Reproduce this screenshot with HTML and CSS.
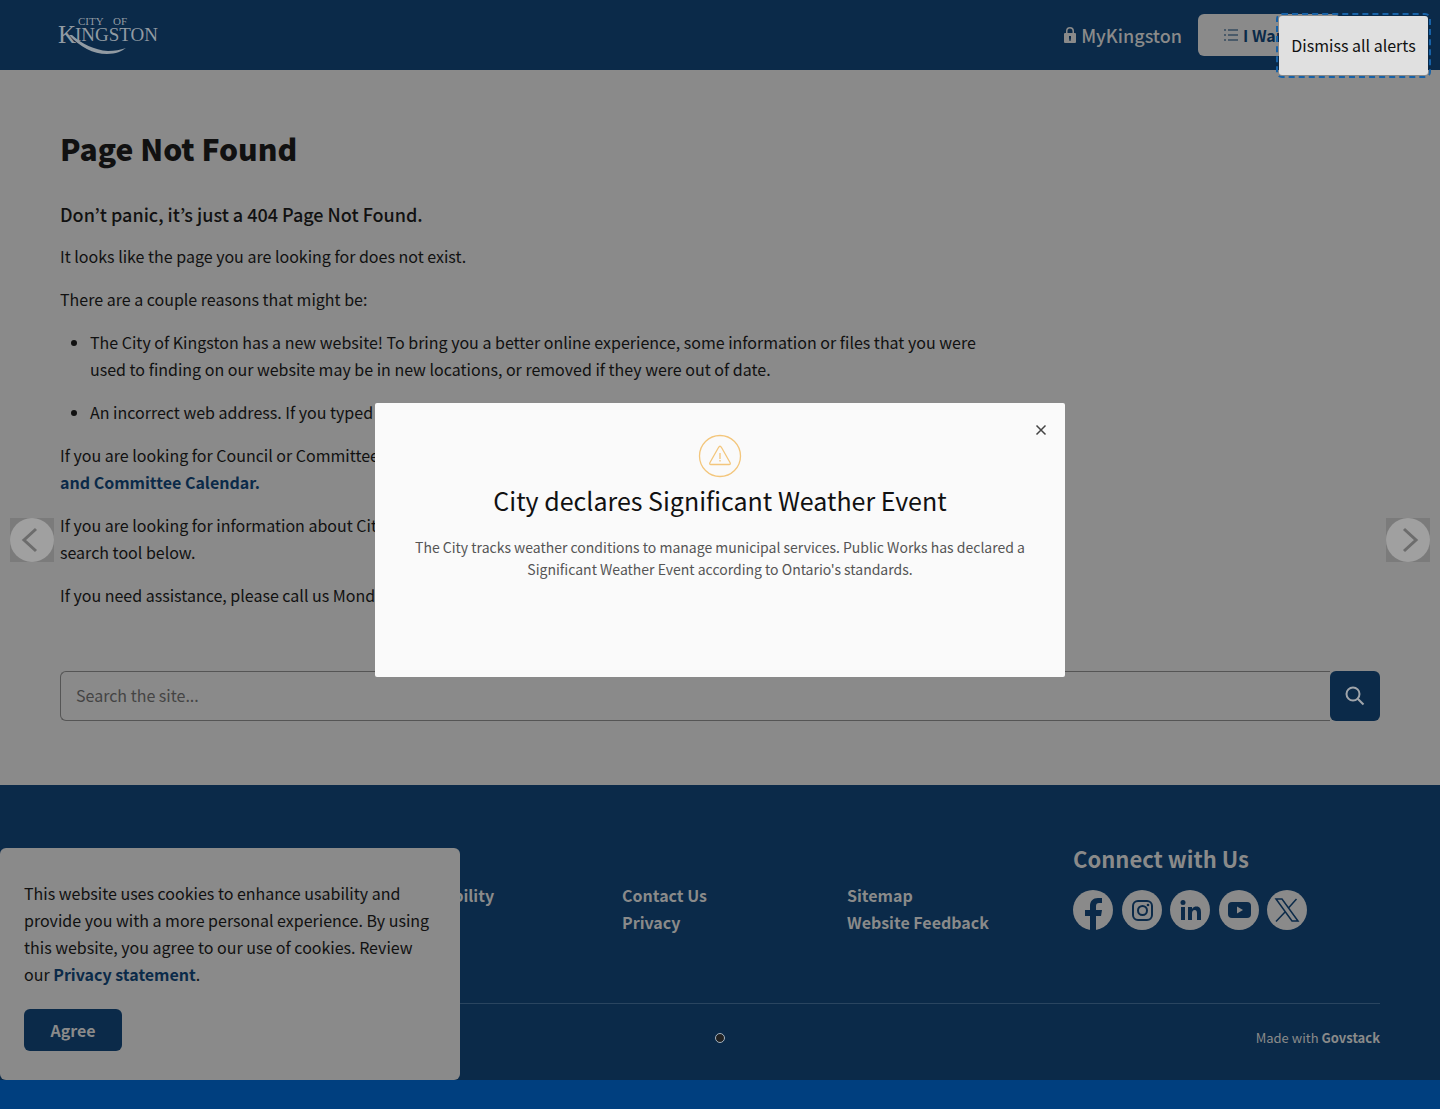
FILE: index.html
```html
<!DOCTYPE html>
<html lang="en">
<head>
<meta charset="utf-8">
<meta name="viewport" content="width=device-width, initial-scale=1">
<title>Page Not Found - City of Kingston</title>
<link rel="stylesheet" href="styles.css">
</head>
<body>
<div class="page">
  <header class="site-header">
    <a href="#" class="logo" aria-label="City of Kingston">
      <svg width="100" height="44" viewBox="0 0 100 44">
        <text x="20" y="12" class="logo-small">CITY</text>
        <text x="55" y="12" class="logo-small">OF</text>
        <text x="0" y="30" class="logo-k">K</text>
        <text x="17" y="28" class="logo-name">INGSTON</text>
        <path d="M11 22C22 34 35 41 49 41C58 41 64 38 68 35C62 37 57 38 50 38C36 37 24 31 14 22Z"/>
      </svg>
    </a>
    <nav class="header-nav">
      <a href="#" class="account">
        <svg width="14" height="18" viewBox="0 0 14 18"><path fill-rule="evenodd" d="M3 7V5a4 4 0 0 1 8 0v2h1q1 0 1 1v8q0 1-1 1H2q-1 0-1-1V8q0-1 1-1ZM4.500 7h5V5a2.500 2.500 0 0 0-5 0ZM6 10v2l.5 3h1L8 12v-2Z"/></svg>
        MyKingston
      </a>
      <button type="button" class="want">
        <svg width="16" height="14" viewBox="0 0 16 14"><path d="M1 2h2M1 7h2M1 12h2M5 2h10M5 7h10M5 12h10"/></svg>
        I Want to...
      </button>
    </nav>
  </header>

  <main class="content">
    <div class="article">
      <h1>Page Not Found</h1>
      <h2>Don’t panic, it’s just a 404 Page Not Found.</h2>
      <p>It looks like the page you are looking for does not exist.</p>
      <p>There are a couple reasons that might be:</p>
      <ul>
        <li>The City of Kingston has a new website! To bring you a better online experience, some information or files that you were used to finding on our website may be in new locations, or removed if they were out of date.</li>
        <li>An incorrect web address. If you typed the address, please check the spelling.</li>
      </ul>
      <p>If you are looking for Council or Committee meeting agendas and minutes, please visit the <a href="#">Council<br>and Committee Calendar.</a></p>
      <p>If you are looking for information about City services, programs or events, please use the<br>search tool below.</p>
      <p>If you need assistance, please call us Monday to Friday.</p>
    </div>
    <form class="search">
      <input type="search" placeholder="Search the site..." aria-label="Search the site">
      <button type="button" aria-label="Search">
        <svg width="20" height="20" viewBox="0 0 20 20"><circle cx="8" cy="8" r="6.500"/><path d="M12.700 12.700L18.500 18.500"/></svg>
      </button>
    </form>
  </main>

  <footer class="site-footer">
    <div class="footer-grid">
      <div></div>
      <nav class="links"><a href="#">Accessibility</a></nav>
      <nav class="links"><a href="#">Contact Us</a><a href="#">Privacy</a></nav>
      <nav class="links"><a href="#">Sitemap</a><a href="#">Website Feedback</a></nav>
      <section class="connect">
        <h2>Connect with Us</h2>
        <div class="social">
          <a href="#" aria-label="Facebook"><svg viewBox="0 0 40 40"><circle cx="20" cy="20" r="20"/><path class="mark" d="M17 40V26h-5v-6h5v-4c0-5 3-8 8-8h4v5h-3c-2 0-3 1-3 3v4h6l-1 6h-5v14Z"/></svg></a>
          <a href="#" aria-label="Instagram"><svg viewBox="0 0 40 40"><circle cx="20" cy="20" r="20"/><rect class="line" x="11" y="11" width="19" height="19" rx="5"/><circle class="line" cx="20.500" cy="20.500" r="4.500"/><circle class="mark" cx="26" cy="15" r="1.300"/></svg></a>
          <a href="#" aria-label="LinkedIn"><svg viewBox="0 0 40 40"><circle cx="20" cy="20" r="20"/><circle class="mark" cx="13" cy="12.500" r="2.500"/><path class="mark" d="M11 17h4v13h-4ZM18 17h4v2c1-2 3-2.400 4.500-2.400 3.500 0 4.500 2.400 4.500 5.900V30h-4v-6.500c0-2-.5-3.500-2.300-3.500S22 21.500 22 23.500V30h-4Z"/></svg></a>
          <a href="#" aria-label="YouTube"><svg viewBox="0 0 40 40"><circle cx="20" cy="20" r="20"/><rect class="mark" x="9" y="12" width="23" height="16" rx="4"/><path d="M18 16.500v7l6-3.500Z"/></svg></a>
          <a href="#" aria-label="X"><svg viewBox="0 0 40 40"><circle cx="20" cy="20" r="20"/><path class="line thin" d="M9 9h6l16 22h-6ZM29.500 9L21 18.500M18.500 21.500L9 31.500"/></svg></a>
        </div>
      </section>
    </div>
    <div class="footer-end">
      <span></span>
      <svg width="12" height="12" viewBox="0 0 12 12" aria-hidden="true"><circle cx="6" cy="6" r="4.500"/></svg>
      <p>Made with <a href="#">Govstack</a></p>
    </div>
  </footer>

  <aside class="cookies">
    <p>This website uses cookies to enhance usability and provide you with a more personal experience. By using this website, you agree to our use of cookies. Review our <a href="#">Privacy statement</a>.</p>
    <button type="button">Agree</button>
  </aside>

  <div class="overlay">
    <button type="button" class="arrow" aria-label="Previous alert"><svg viewBox="0 0 44 44"><circle cx="22" cy="22" r="22"/><path d="M26 11L14 22L26 33"/></svg></button>
    <section class="alert" role="dialog" aria-labelledby="alert-title">
      <button type="button" class="close" aria-label="Close"><svg width="12" height="12" viewBox="0 0 12 12"><path d="M1.500 1.500l9 9M10.500 1.500l-9 9"/></svg></button>
      <svg class="warning" width="44" height="44" viewBox="0 0 44 44"><circle cx="22" cy="22" r="20.500"/><path d="M20.500 13.500q1.500-2.500 3 0l8.500 15q1 2-1 2H13q-2 0-1-2Z"/><path d="M22 19v6M22 26v1.500"/></svg>
      <h2 id="alert-title">City declares Significant Weather Event</h2>
      <p>The City tracks weather conditions to manage municipal services. Public Works has declared a Significant Weather Event according to Ontario's standards.</p>
    </section>
    <button type="button" class="arrow" aria-label="Next alert"><svg viewBox="0 0 44 44"><circle cx="22" cy="22" r="22"/><path d="M18 11L30 22L18 33"/></svg></button>
    <button type="button" class="dismiss">Dismiss all alerts</button>
  </div>
</div>
</body>
</html>
```
FILE: styles.css
```css
:root {
  --navy: #0b2a49;
  --grey: #8a8a8a;
  --ink: #111;
}
* { box-sizing: border-box; }
body {
  margin: 0;
  background: #003f7f;
  color: var(--ink);
  font: 16px/27px "Noto Sans CJK KR", "Noto Sans", sans-serif;
}
h1, h2, p, ul { margin: 0; }
a { color: inherit; text-decoration: none; font-weight: 700; }
button { font: inherit; border: 0; padding: 0; cursor: pointer; }
svg { display: block; }
.page { position: relative; background: var(--grey); }

.site-header {
  display: flex;
  align-items: center;
  justify-content: space-between;
  height: 70px;
  padding: 0 100px 0 58px;
  background: var(--navy);
  color: var(--grey);
}
.logo svg { fill: #929ba3; font-family: "Liberation Serif", serif; font-weight: 400; }
.logo-small { font-size: 11px; }
.logo-k { font-size: 25px; }
.logo-name { font-size: 19px; }
.header-nav { display: flex; align-items: center; gap: 16px; }
.account {
  display: flex;
  align-items: center;
  gap: 4px;
  font-size: 18px;
  font-weight: 500;
}
.account svg { fill: var(--grey); }
.want {
  display: flex;
  align-items: center;
  gap: 4px;
  width: 142px;
  height: 42px;
  padding-left: 25px;
  border-radius: 6px;
  background: var(--grey);
  color: var(--navy);
  font-weight: 700;
  white-space: nowrap;
}
.want svg { flex: none; stroke: var(--navy); stroke-width: 1; }

.content { padding: 56px 60px 64px; }
.article { max-width: 940px; }
h1 { font-size: 30px; line-height: 44px; font-weight: 900; margin-bottom: 31px; }
.article h2 { font-size: 18px; line-height: 27px; font-weight: 500; margin-bottom: 15px; }
.article p, .article li { margin-bottom: 16px; }
.article ul { padding-left: 30px; }
.article a { color: var(--navy); }
.search { display: flex; margin-top: 62px; }
.search input {
  flex: 1;
  height: 50px;
  padding: 0 15px 2px;
  border: 1px solid #555;
  border-right: 0;
  border-radius: 6px 0 0 6px;
  background: transparent;
  font: inherit;
}
.search input::placeholder { color: #444; opacity: 1; }
.search button {
  display: grid;
  place-items: center;
  width: 50px;
  border-radius: 6px;
  background: var(--navy);
}
.search svg { fill: none; stroke: #a0a5ab; stroke-width: 2; }

.site-footer { padding: 58px 60px 28px; background: var(--navy); color: var(--grey); }
.footer-grid {
  display: grid;
  grid-template-columns: 337fr 225fr 225fr 226fr 307fr;
  padding-bottom: 67px;
  border-bottom: 1px solid #2a4560;
}
.links { display: flex; flex-direction: column; padding-top: 39px; }
.connect h2 { font-size: 22px; line-height: 30px; margin-bottom: 17px; }
.social { display: flex; justify-content: space-between; width: 234px; }
.social svg { width: 40px; height: 40px; fill: var(--grey); }
.social .mark { fill: var(--navy); }
.social .line { fill: none; stroke: var(--navy); stroke-width: 2; }
.social .thin { stroke-width: 1.5; }
.footer-end {
  display: grid;
  grid-template-columns: 1fr auto 1fr;
  align-items: center;
  padding: 20px 0 1px;
}
.footer-end p { font-size: 13px; text-align: right; }
.footer-end svg { fill: #222; stroke: #a5b3c0; }

.cookies {
  position: absolute;
  left: 0;
  bottom: 0;
  width: 460px;
  padding: 32px 24px 29px;
  border-radius: 6px;
  background: var(--grey);
}
.cookies a { color: var(--navy); }
.cookies button {
  width: 98px;
  height: 42px;
  margin-top: 21px;
  border-radius: 6px;
  background: var(--navy);
  color: var(--grey);
  font-weight: 700;
}

.overlay {
  position: absolute;
  inset: 0;
  display: flex;
  align-items: center;
  justify-content: space-between;
  padding: 0 10px;
}
.arrow { width: 44px; height: 44px; background: #7b7b7b; }
.arrow circle { fill: #a0a0a0; }
.arrow path { fill: none; stroke: #6c6c6c; stroke-width: 3; }
.alert {
  position: relative;
  width: 690px;
  max-width: 80%;
  min-height: 274px;
  padding: 31px 30px;
  border-radius: 2px;
  background: #fafafa;
  text-align: center;
}
.alert h2 { margin: 3px 0 17px; font-size: 25px; line-height: 38px; font-weight: 400; }
.alert p { color: #555; font-size: 14px; line-height: 22px; }
.warning { margin: 0 auto; fill: none; stroke: #f3c67c; stroke-width: 1.3; }
.close { position: absolute; top: 21px; right: 18px; background: none; }
.close svg { stroke: #444; stroke-width: 1.5; }
.dismiss {
  position: absolute;
  top: 16px;
  right: 12px;
  width: 149px;
  height: 59px;
  border-radius: 3px;
  background: #e0e0e0;
  color: var(--ink);
  outline: 2px dashed #1762a8;
  outline-offset: 1px;
}
```
